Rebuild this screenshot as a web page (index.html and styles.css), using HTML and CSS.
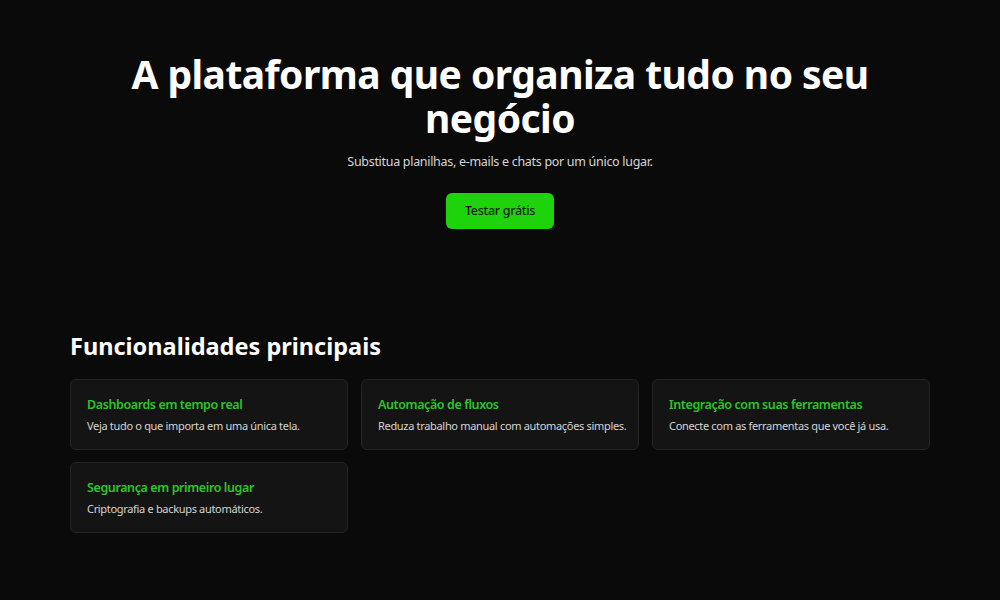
FILE: index.html
```html
<!DOCTYPE html>
<html lang="pt-BR">
<head>
<meta charset="utf-8">
<title>Plataforma</title>
<link rel="stylesheet" href="styles.css">
</head>
<body>
<main class="page">
  <section class="hero">
    <h1 class="hero-title">A plataforma que organiza tudo no seu negócio</h1>
    <p class="hero-sub">Substitua planilhas, e-mails e chats por um único lugar.</p>
    <a class="cta" href="#">Testar grátis</a>
  </section>
  <section class="features">
    <h2 class="features-title">Funcionalidades principais</h2>
    <div class="grid">
      <div class="card">
        <h3 class="card-title">Dashboards em tempo real</h3>
        <p class="card-text">Veja tudo o que importa em uma única tela.</p>
      </div>
      <div class="card">
        <h3 class="card-title">Automação de fluxos</h3>
        <p class="card-text">Reduza trabalho manual com automações simples.</p>
      </div>
      <div class="card">
        <h3 class="card-title">Integração com suas ferramentas</h3>
        <p class="card-text">Conecte com as ferramentas que você já usa.</p>
      </div>
      <div class="card">
        <h3 class="card-title">Segurança em primeiro lugar</h3>
        <p class="card-text">Criptografia e backups automáticos.</p>
      </div>
    </div>
  </section>
</main>
</body>
</html>
```

FILE: styles.css
```css
* { box-sizing: border-box; }
html, body {
  margin: 0;
  background: #0b0a0a;
  color: #ffffff;
  font-family: "Noto Sans", "Open Sans", sans-serif;
}
.page {
  max-width: 860px;
  margin: 0 auto;
}
.hero {
  padding-top: 52px;
  display: flex;
  flex-direction: column;
  align-items: center;
  text-align: center;
}
.hero-title {
  margin: 0;
  max-width: 800px;
  font-size: 39px;
  line-height: 44px;
  font-weight: 700;
  letter-spacing: -0.55px;
}
.hero-sub {
  margin: 12px 0 0;
  font-size: 12.5px;
  line-height: 20px;
  letter-spacing: -0.3px;
  color: #d6d6d6;
}
.cta {
  margin-top: 21px;
  display: inline-block;
  background: #1fd30c;
  color: #0b1a08;
  text-decoration: none;
  font-size: 12.5px;
  font-weight: 500;
  letter-spacing: -0.3px;
  line-height: 20px;
  padding: 8px 19px;
  border-radius: 6px;
}
.features {
  margin-top: 103px;
}
.features-title {
  margin: 0 0 18px;
  font-size: 23.5px;
  line-height: 29px;
  font-weight: 700;
}
.grid {
  display: grid;
  grid-template-columns: repeat(3, 1fr);
  gap: 12px 13px;
}
.card {
  background: #141414;
  border: 1px solid #242424;
  border-radius: 6px;
  padding: 15px 10px 14px 16px;
}
.card-title {
  margin: 0;
  font-size: 12.5px;
  line-height: 20px;
  font-weight: 600;
  letter-spacing: -0.4px;
  color: #2cc52a;
}
.card-text {
  margin: 2px 0 0;
  font-size: 11px;
  line-height: 18px;
  letter-spacing: -0.32px;
  color: #d4d4d4;
}
```
